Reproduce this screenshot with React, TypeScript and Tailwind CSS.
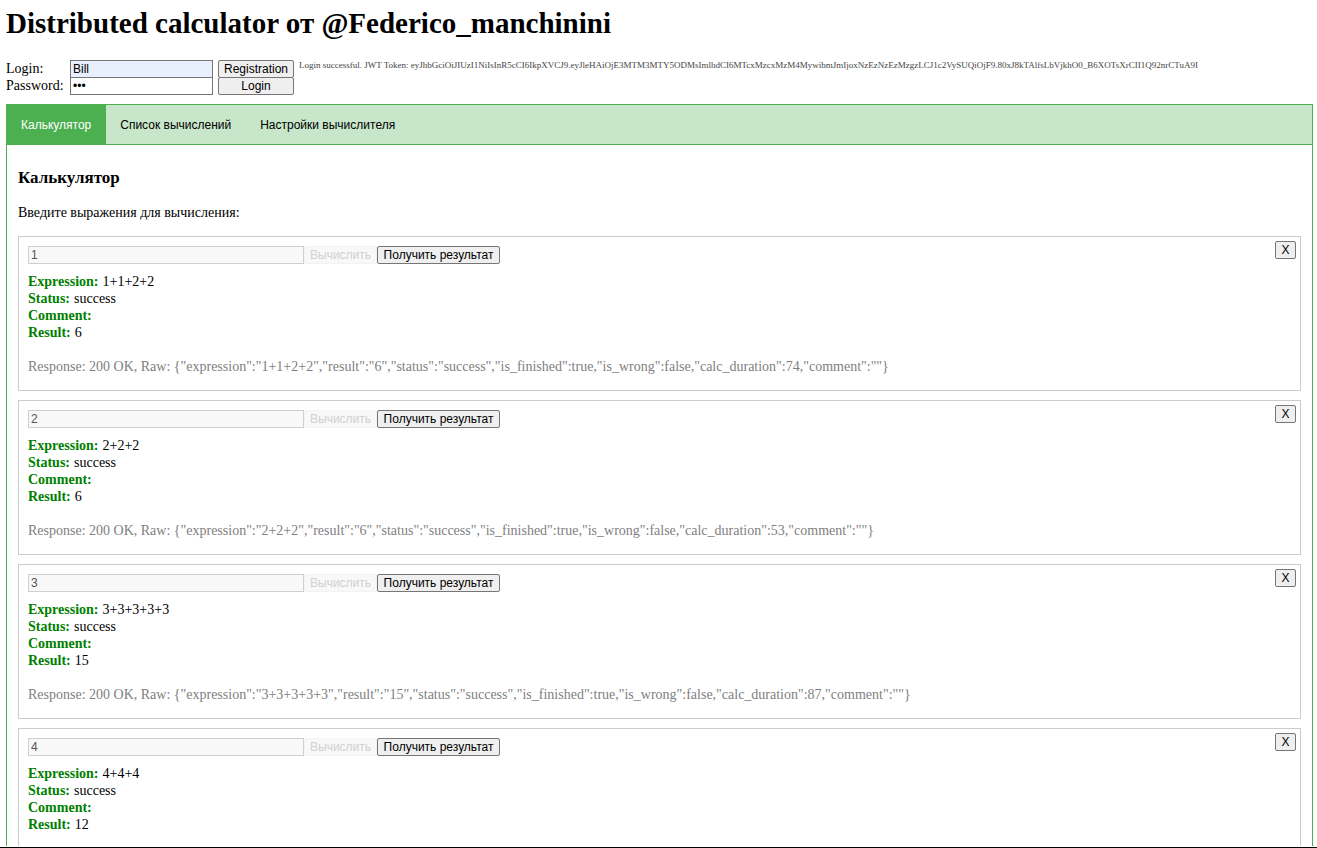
import { useState } from 'react';

type Calculation = {
  id: number;
  expression: string;
  result: string;
  duration?: number;
};

const calculations: Calculation[] = [
  { id: 1, expression: '1+1+2+2', result: '6', duration: 74 },
  { id: 2, expression: '2+2+2', result: '6', duration: 53 },
  { id: 3, expression: '3+3+3+3+3', result: '15', duration: 87 },
  { id: 4, expression: '4+4+4', result: '12' },
];

const tabs = ['Калькулятор', 'Список вычислений', 'Настройки вычислителя'];

const token =
  'eyJhbGciOiJIUzI1NiIsInR5cCI6IkpXVCJ9.eyJleHAiOjE3MTM3MTY5ODMsImlhdCI6MTcxMzcxMzM4MywibmJmIjoxNzEzNzEzMzgzLCJ1c2VySUQiOjF9.80xJ8kTAlfsLbVjkhO0_B6XOTsXrCII1Q92nrCTuA9I';

const sans = "font-['Liberation_Sans',sans-serif] text-[12px] leading-[14px]";
const button = `${sans} h-[18px] rounded-[2px] border border-[#767676] bg-[#efefef] text-black`;
const field = `${sans} h-[18px] w-[143px] border border-[#767676] px-[2px] text-black`;

function LoginForm() {
  return (
    <form className="flex items-start gap-[5px]" onSubmit={(e) => e.preventDefault()}>
      <div className="grid shrink-0 auto-rows-[17px] grid-cols-[59px_auto_76px] gap-x-[5px] pb-px">
        <label htmlFor="login">Login:</label>
        <input id="login" defaultValue="Bill" className={`${field} bg-[#e8f0fe]`} />
        <button type="button" className={button}>
          Registration
        </button>
        <label htmlFor="password">Password:</label>
        <input id="password" type="password" defaultValue="123" className={`${field} bg-white`} />
        <button type="submit" className={button}>
          Login
        </button>
      </div>
      <p className="min-w-0 text-[9px] leading-[10px] break-words text-[#444]">
        Login successful. JWT Token: {token}
      </p>
    </form>
  );
}

function rawResponse(item: Calculation) {
  return JSON.stringify({
    expression: item.expression,
    result: item.result,
    status: 'success',
    is_finished: true,
    is_wrong: false,
    calc_duration: item.duration,
    comment: '',
  });
}

function CalculationCard({ item, onRemove }: { item: Calculation; onRemove: () => void }) {
  const rows = [
    ['Expression:', item.expression],
    ['Status:', 'success'],
    ['Comment:', ''],
    ['Result:', item.result],
  ];
  return (
    <section className="border border-[#ccc] pt-[4px] pr-[4px] pb-[15px] pl-[9px]">
      <div className="flex items-start justify-between">
        <div className="flex pt-[5px]">
          <input
            aria-label="Выражение"
            disabled
            defaultValue={String(item.id)}
            className={`${sans} h-[18px] w-[276px] border border-[#cfcfcf] bg-[#f8f8f8] px-[2px] text-[#545454]`}
          />
          <button
            type="button"
            disabled
            className={`${sans} h-[18px] rounded-[2px] border border-[#f3f3f3] bg-[#f8f8f8] px-[5px] text-[#d0d0d0]`}
          >
            Вычислить
          </button>
          <button type="button" className={`${button} w-[123px]`}>
            Получить результат
          </button>
        </div>
        <button type="button" aria-label="X" onClick={onRemove} className={`${button} w-[21px]`}>
          X
        </button>
      </div>
      <dl className="pt-[9px]">
        {rows.map(([name, value]) => (
          <div key={name} className="flex gap-[4px]">
            <dt className="font-bold text-[#008000]">{name}</dt>
            <dd>{value}</dd>
          </div>
        ))}
      </dl>
      <p className="min-h-[34px] pt-[17px] break-words text-[#808080]">
        {item.duration !== undefined && `Response: 200 OK, Raw: ${rawResponse(item)}`}
      </p>
    </section>
  );
}

export default function App() {
  const [active, setActive] = useState(0);
  const [items, setItems] = useState(calculations);

  return (
    <div className="flex h-screen flex-col border-b border-black bg-white pb-px font-['Liberation_Serif',serif] text-[14px] leading-[17px] text-black">
      <div className="min-h-0 flex-1 overflow-y-auto pt-[6px] pr-[4px] pl-[6px] [scrollbar-width:none]">
        <h1 className="pb-[20px] text-[29px] leading-[34px] font-bold">
          Distributed calculator от @Federico_manchinini
        </h1>
        <LoginForm />
        <nav className="mt-[9px] flex border border-[#4caf50] bg-[#c8e6c9]">
          {tabs.map((tab, i) => (
            <button
              key={tab}
              type="button"
              onClick={() => setActive(i)}
              className={`${sans} h-[39px] pr-[15px] pl-[14px] ${
                i === active ? 'bg-[#4caf50] text-white' : 'text-black'
              }`}
            >
              {tab}
            </button>
          ))}
        </nav>
        <main className="border border-t-0 border-[#4caf50] px-[11px] pb-[11px]">
          <h3 className="pt-[23px] text-[17px] leading-[20px] font-bold">{tabs[active]}</h3>
          <p className="pt-[16px] pb-[15px]">Введите выражения для вычисления:</p>
          <div className="flex flex-col gap-[9px]">
            {items.map((item) => (
              <CalculationCard
                key={item.id}
                item={item}
                onRemove={() => setItems(items.filter((other) => other.id !== item.id))}
              />
            ))}
          </div>
        </main>
      </div>
    </div>
  );
}
